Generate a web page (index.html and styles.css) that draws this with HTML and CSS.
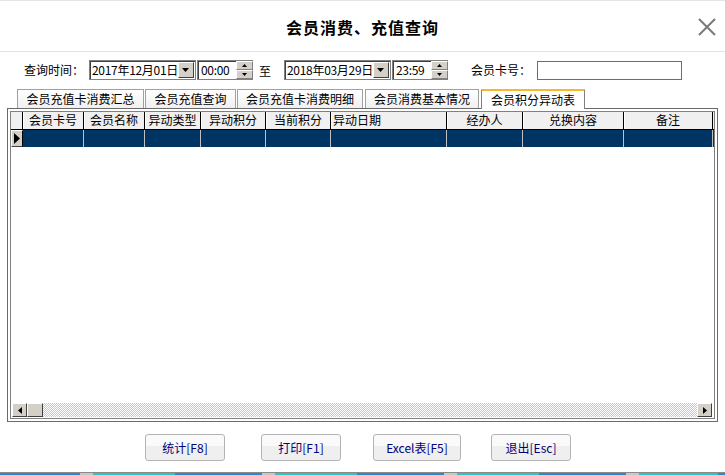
FILE: index.html
```html
<!DOCTYPE html>
<html lang="zh">
<head>
<meta charset="utf-8">
<link rel="stylesheet" href="styles.css">
</head>
<body>
<div class="win">
  <div class="titlebar">
    <div></div>
    <div class="title">会员消费、充值查询</div>
    <div class="close">
      <svg width="20" height="20" viewBox="0 0 20 20"><path d="M2 2L18 18M18 2L2 18" stroke="#7a7a7a" stroke-width="2" fill="none"/></svg>
    </div>
  </div>

  <div class="filters">
    <span class="lbl">查询时间：</span>
    <div class="date">
      <span class="val">2017年12月01日</span>
      <span class="ddbtn"><svg width="8" height="5" viewBox="0 0 8 5"><path d="M0 0H7L3.5 4Z" fill="#000"/></svg></span>
    </div>
    <div class="time">
      <span class="val">00:00</span>
      <span class="spin"><span class="up"><svg width="5" height="3" viewBox="0 0 5 3"><path d="M2.5 0L5 3H0Z" fill="#000"/></svg></span><span class="down"><svg width="5" height="3" viewBox="0 0 5 3"><path d="M0 0H5L2.5 3Z" fill="#000"/></svg></span></span>
    </div>
    <span class="to">至</span>
    <div class="date">
      <span class="val">2018年03月29日</span>
      <span class="ddbtn"><svg width="8" height="5" viewBox="0 0 8 5"><path d="M0 0H7L3.5 4Z" fill="#000"/></svg></span>
    </div>
    <div class="time">
      <span class="val">23:59</span>
      <span class="spin"><span class="up"><svg width="5" height="3" viewBox="0 0 5 3"><path d="M2.5 0L5 3H0Z" fill="#000"/></svg></span><span class="down"><svg width="5" height="3" viewBox="0 0 5 3"><path d="M0 0H5L2.5 3Z" fill="#000"/></svg></span></span>
    </div>
    <span class="lbl card">会员卡号：</span>
    <div class="cardbox"></div>
  </div>

  <div class="tabs">
    <div class="tab w1">会员充值卡消费汇总</div>
    <div class="tab w2">会员充值查询</div>
    <div class="tab w3">会员充值卡消费明细</div>
    <div class="tab w4">会员消费基本情况</div>
    <div class="tab active w5">会员积分异动表</div>
  </div>

  <div class="panel">
    <div class="grid">
      <div class="hrow">
        <div class="ind"></div>
        <div class="hc c1">会员卡号</div>
        <div class="hc c2">会员名称</div>
        <div class="hc c3">异动类型</div>
        <div class="hc c4">异动积分</div>
        <div class="hc c5">当前积分</div>
        <div class="hc c6 left">异动日期</div>
        <div class="hc c7">经办人</div>
        <div class="hc c8">兑换内容</div>
        <div class="hc c9">备注</div>
      </div>
      <div class="drow">
        <div class="ind"><svg width="6" height="11" viewBox="0 0 6 11"><path d="M0 0L6 5.5L0 11Z" fill="#000"/></svg></div>
        <div class="dc c1"></div>
        <div class="dc c2"></div>
        <div class="dc c3"></div>
        <div class="dc c4"></div>
        <div class="dc c5"></div>
        <div class="dc c6"></div>
        <div class="dc c7"></div>
        <div class="dc c8"></div>
        <div class="dc c9"></div>
      </div>
      <div class="body"></div>
      <div class="hscroll">
        <span class="sbtn"><svg width="4" height="7" viewBox="0 0 4 7"><path d="M4 0V7L0 3.5Z" fill="#000"/></svg></span>
        <span class="thumb"></span>
        <span class="track"></span>
        <span class="sbtn"><svg width="4" height="7" viewBox="0 0 4 7"><path d="M0 0V7L4 3.5Z" fill="#000"/></svg></span>
      </div>
    </div>
  </div>

  <div class="buttons">
    <button class="btn b1">统计[F8]</button>
    <button class="btn b2">打印[F1]</button>
    <button class="btn b3">Excel表[F5]</button>
    <button class="btn b4">退出[Esc]</button>
  </div>

  <div class="taskbar"></div>
</div>
</body>
</html>
```

FILE: styles.css
```css
* { box-sizing: border-box; }
html, body { margin: 0; padding: 0; }
body {
  width: 725px;
  height: 475px;
  overflow: hidden;
  background: #fff;
  font-family: "Noto Sans CJK SC", "Noto Sans", sans-serif;
  font-size: 12px;
  color: #000;
}
.win { width: 725px; height: 475px; display: flex; flex-direction: column; }

.titlebar {
  height: 52px;
  flex: none;
  border-top: 1px solid #e4e4e4;
  border-bottom: 1px solid #e2e2e2;
  display: grid;
  grid-template-columns: 1fr auto 1fr;
  align-items: center;
}
.title {
  font-size: 16px;
  font-weight: bold;
  letter-spacing: 1px;
  padding-top: 1px;
}
.close { justify-self: end; padding-right: 8px; display: flex; padding-top: 2px; }

.filters {
  display: flex;
  flex: none;
  align-items: center;
  height: 20px;
  margin-top: 8px;
  padding-left: 24px;
}
.lbl { width: 65px; line-height: 20px; }
.lbl.card { width: 66px; margin-left: 23px; }
.to { width: 31px; padding-left: 6px; }
.date {
  width: 107px;
  height: 20px;
  border: 1px solid #808080;
  box-shadow: inset 1px 1px 0 #404040;
  display: flex;
  align-items: center;
  justify-content: space-between;
  padding-left: 2px;
  margin-right: 1px;
}
.val { font-size: 12px; line-height: 16px; letter-spacing: -0.3px; }
.ddbtn {
  width: 16px;
  height: 16px;
  margin-right: 1px;
  background: #d4d0c8;
  border: 1px solid;
  border-color: #fff #404040 #404040 #fff;
  display: flex;
  align-items: center;
  justify-content: center;
}
.time {
  width: 56px;
  height: 20px;
  border: 1px solid #808080;
  box-shadow: inset 1px 1px 0 #404040;
  display: flex;
  align-items: center;
  justify-content: space-between;
  padding-left: 3px;
}
.spin {
  width: 17px;
  height: 18px;
  margin-right: -1px;
  display: flex;
  flex-direction: column;
}
.spin span {
  flex: 1;
  background: #d4d0c8;
  border: 1px solid;
  border-color: #fff #808080 #808080 #fff;
  display: flex;
  align-items: center;
  justify-content: center;
}
.cardbox {
  width: 145px;
  height: 19px;
  border: 1px solid #6e6e6e;
}

.tabs {
  display: flex;
  flex: none;
  align-items: flex-end;
  height: 20px;
  margin-top: 8px;
  padding-left: 17px;
}
.tab {
  height: 19px;
  line-height: 17px;
  text-align: center;
  background: linear-gradient(#ffffff, #f0f0f0);
  border: 1px solid #a0a0a0;
  border-bottom: none;
  margin-right: 1px;
  font-size: 12px;
}
.w1 { width: 127px; }
.w2 { width: 91px; }
.w3 { width: 126px; }
.w4 { width: 114px; margin-left: 1px; }
.w5 { width: 104px; margin-left: 1px; }
.tab.active {
  height: 20px;
  background: #fff;
  border-top: 2px solid #f5a623;
  border-color: #f5b830 #808080 #fff #808080;
  position: relative;
  z-index: 1;
  margin-bottom: -1px;
  line-height: 18px;
}

.panel {
  margin: 0 7px;
  flex: none;
  height: 314px;
  border: 1px solid #6a6a6a;
  padding: 2px;
}
.grid {
  height: 100%;
  border: 1px solid #808080;
  display: flex;
  flex-direction: column;
}
.hrow, .drow { display: flex; flex: none; }
.hrow { background: #f0f0f0; border-bottom: 1px solid #000; height: 18px; }
.drow { background: #003463; height: 17px; }
.ind { width: 12px; flex: none; }
.hrow .ind { background: #f0f0f0; border-right: 1px solid #000; }
.drow .ind {
  background: #d4d0c8;
  border: 1px solid;
  border-color: #fff #000 #404040 #fff;
  display: flex;
  align-items: center;
  justify-content: center;
}
.hc {
  flex: none;
  text-align: center;
  line-height: 16px;
  border-right: 1px solid #000;
  box-shadow: inset 1px 0 0 #fff;
}
.hc.left { text-align: left; padding-left: 2px; }
.dc { flex: none; border-right: 1px solid #c0c0c0; }
.c1 { width: 61px; }
.c2 { width: 61px; }
.c3 { width: 56px; }
.c4 { width: 65px; }
.c5 { width: 65px; }
.c6 { width: 116px; }
.c7 { width: 76px; }
.c8 { width: 101px; }
.c9 { width: 89px; }
.body { flex: 1; background: #fff; }
.hscroll { height: 15px; flex: none; display: flex; padding: 0 2px 1px 1px; }
.sbtn, .thumb {
  width: 15px;
  flex: none;
  background: #d4d0c8;
  border: 1px solid;
  border-color: #fff #404040 #404040 #fff;
  display: flex;
  align-items: center;
  justify-content: center;
}
.thumb { width: 16px; }
.track {
  flex: 1;
  background-image: conic-gradient(#c8c8c8 25%, #fff 0 50%, #c8c8c8 0 75%, #fff 0);
  background-size: 2px 2px;
}

.buttons {
  display: flex;
  flex: none;
  height: 27px;
  margin-top: 12px;
  padding-left: 145px;
}
.btn {
  height: 27px;
  border: 1px solid #b4b4b4;
  border-radius: 3px;
  background: linear-gradient(#fafafa 0, #fafafa 45%, #efefef 45%, #efefef 100%);
  font-family: "Noto Sans CJK SC", "Noto Sans", sans-serif;
  font-size: 12px;
  color: #000080;
  padding: 0;
}
.b1 { width: 80px; margin-right: 36px; }
.b2 { width: 80px; margin-right: 32px; }
.b3 { width: 88px; margin-right: 30px; }
.b4 { width: 80px; }

.taskbar {
  margin-top: auto;
  flex: none;
  height: 3px;
  border-top: 1px solid #8a8a8a;
  background: repeating-linear-gradient(90deg,
    #2f86d2 0, #2f86d2 87px,
    #c8c8c8 87px, #c8c8c8 100px,
    #2ec3c6 100px, #2ec3c6 182px);
  background-position: -7px 0;
}
```
